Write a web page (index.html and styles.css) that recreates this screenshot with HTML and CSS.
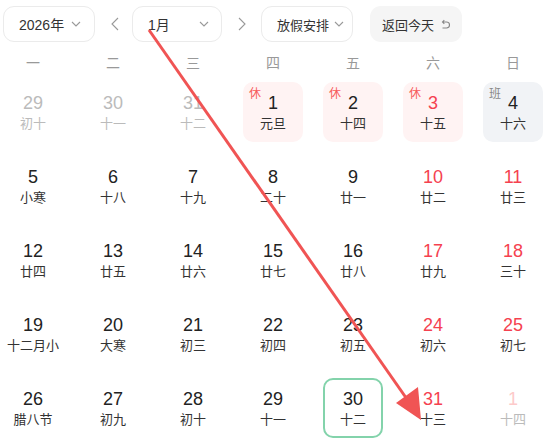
FILE: index.html
```html
<!DOCTYPE html>
<html lang="zh">
<head>
<meta charset="utf-8">
<link rel="stylesheet" href="styles.css">
</head>
<body>
<div class="app">
  <div class="toolbar">
    <div class="select year">2026年<svg class="chev" width="10" height="6" viewBox="0 0 10 6"><polyline points="1,1 5,5 9,1"/></svg></div>
    <div class="nav"><svg width="8" height="14" viewBox="0 0 8 14"><polyline points="7,1 1,7 7,13"/></svg></div>
    <div class="select month">1月<svg class="chev" width="10" height="6" viewBox="0 0 10 6"><polyline points="1,1 5,5 9,1"/></svg></div>
    <div class="nav nav-r"><svg width="8" height="14" viewBox="0 0 8 14"><polyline points="1,1 7,7 1,13"/></svg></div>
    <div class="select holiday">放假安排<svg class="chev" width="10" height="6" viewBox="0 0 10 6"><polyline points="1,1 5,5 9,1"/></svg></div>
    <div class="today-btn">返回今天<svg class="ret" width="10" height="11" viewBox="0 0 10 11"><path d="M2.5 3 H6.5 A3 3 0 0 1 6.5 9 H2.5 M4.3 1.2 L2.5 3 L4.3 4.8"/></svg></div>
  </div>
  <div class="weekdays">
    <span>一</span><span>二</span><span>三</span><span>四</span><span>五</span><span>六</span><span>日</span>
  </div>
  <div class="grid">
    <div class="cell other"><span class="num">29</span><span class="lunar">初十</span></div>
    <div class="cell other"><span class="num">30</span><span class="lunar">十一</span></div>
    <div class="cell other"><span class="num">31</span><span class="lunar">十二</span></div>
    <div class="cell rest"><i class="tag">休</i><span class="num">1</span><span class="lunar">元旦</span></div>
    <div class="cell rest"><i class="tag">休</i><span class="num">2</span><span class="lunar">十四</span></div>
    <div class="cell rest weekend"><i class="tag">休</i><span class="num">3</span><span class="lunar">十五</span></div>
    <div class="cell work"><i class="tag">班</i><span class="num">4</span><span class="lunar">十六</span></div>

    <div class="cell"><span class="num">5</span><span class="lunar">小寒</span></div>
    <div class="cell"><span class="num">6</span><span class="lunar">十八</span></div>
    <div class="cell"><span class="num">7</span><span class="lunar">十九</span></div>
    <div class="cell"><span class="num">8</span><span class="lunar">二十</span></div>
    <div class="cell"><span class="num">9</span><span class="lunar">廿一</span></div>
    <div class="cell weekend"><span class="num">10</span><span class="lunar">廿二</span></div>
    <div class="cell weekend"><span class="num">11</span><span class="lunar">廿三</span></div>

    <div class="cell"><span class="num">12</span><span class="lunar">廿四</span></div>
    <div class="cell"><span class="num">13</span><span class="lunar">廿五</span></div>
    <div class="cell"><span class="num">14</span><span class="lunar">廿六</span></div>
    <div class="cell"><span class="num">15</span><span class="lunar">廿七</span></div>
    <div class="cell"><span class="num">16</span><span class="lunar">廿八</span></div>
    <div class="cell weekend"><span class="num">17</span><span class="lunar">廿九</span></div>
    <div class="cell weekend"><span class="num">18</span><span class="lunar">三十</span></div>

    <div class="cell"><span class="num">19</span><span class="lunar">十二月小</span></div>
    <div class="cell"><span class="num">20</span><span class="lunar">大寒</span></div>
    <div class="cell"><span class="num">21</span><span class="lunar">初三</span></div>
    <div class="cell"><span class="num">22</span><span class="lunar">初四</span></div>
    <div class="cell"><span class="num">23</span><span class="lunar">初五</span></div>
    <div class="cell weekend"><span class="num">24</span><span class="lunar">初六</span></div>
    <div class="cell weekend"><span class="num">25</span><span class="lunar">初七</span></div>

    <div class="cell"><span class="num">26</span><span class="lunar">腊八节</span></div>
    <div class="cell"><span class="num">27</span><span class="lunar">初九</span></div>
    <div class="cell"><span class="num">28</span><span class="lunar">初十</span></div>
    <div class="cell"><span class="num">29</span><span class="lunar">十一</span></div>
    <div class="cell today"><span class="num">30</span><span class="lunar">十二</span></div>
    <div class="cell weekend"><span class="num">31</span><span class="lunar">十三</span></div>
    <div class="cell other next"><span class="num">1</span><span class="lunar">十四</span></div>
  </div>
  <svg class="annot" width="553" height="444" viewBox="0 0 553 444">
    <line x1="149" y1="30" x2="409" y2="402" />
    <polygon points="421,420 396,403 418,387" />
  </svg>
</div>
</body>
</html>
```

FILE: styles.css
```css
html, body {
  margin: 0;
  padding: 0;
  background: #fff;
}
body {
  font-family: "Liberation Sans", "Noto Sans CJK SC", sans-serif;
  color: #222;
}
.app {
  position: relative;
  width: 553px;
  height: 444px;
  padding: 6px 0 0 3px;
  box-sizing: border-box;
  overflow: hidden;
}
.toolbar {
  display: flex;
  align-items: center;
  height: 36px;
}
.select {
  box-sizing: border-box;
  height: 36px;
  border: 1px solid #ebebeb;
  border-radius: 11px;
  display: flex;
  align-items: center;
  justify-content: space-between;
  font-size: 14px;
  color: #333;
}
.chev polyline, .nav polyline {
  fill: none;
  stroke: #999;
  stroke-width: 1.1;
}
.year {
  width: 92px;
  padding: 0 13px 0 15px;
}
.month {
  width: 90px;
  padding: 0 12px 0 15px;
}
.holiday {
  width: 92px;
  padding: 0 8px 0 15px;
  justify-content: flex-start;
  gap: 5px;
  font-size: 13px;
}
.nav {
  width: 37px;
  display: flex;
  justify-content: center;
  align-items: center;
  padding-left: 2px;
  box-sizing: border-box;
}
.nav-r {
  width: 39px;
  padding-left: 0;
}
.today-btn {
  margin-left: 17px;
  width: 92px;
  height: 36px;
  box-sizing: border-box;
  padding: 0 0 0 12px;
  background: #f5f5f5;
  border-radius: 11px;
  display: flex;
  align-items: center;
  gap: 6px;
  font-size: 13px;
  color: #333;
}
.ret path {
  fill: none;
  stroke: #888;
  stroke-width: 1.1;
}
.weekdays {
  margin-top: 11px;
  display: grid;
  grid-template-columns: repeat(7, 60px);
  column-gap: 20px;
  height: 20px;
  line-height: 20px;
  font-size: 14px;
  color: #999;
  text-align: center;
}
.grid {
  margin-top: 9px;
  display: grid;
  grid-template-columns: repeat(7, 60px);
  grid-auto-rows: 60px;
  column-gap: 20px;
  row-gap: 14px;
}
.cell {
  position: relative;
  box-sizing: border-box;
  border-radius: 10px;
  display: flex;
  flex-direction: column;
  align-items: center;
  padding-top: 11px;
}
.num {
  font-size: 18px;
  line-height: 20px;
  color: #222;
}
.lunar {
  margin-top: 3px;
  font-size: 13px;
  line-height: 16px;
  color: #333;
  white-space: nowrap;
}
.other .num, .other .lunar {
  color: #bbb;
}
.other.next .num {
  color: #fdcaca;
}
.weekend .num {
  color: #f5414f;
}
.rest {
  background: #fff3f3;
}
.work {
  background: #f1f3f6;
}
.tag {
  position: absolute;
  top: 5px;
  left: 6px;
  font-style: normal;
  font-size: 12px;
  line-height: 14px;
  color: #f75a5a;
}
.work .tag {
  color: #888;
}
.today {
  border: 2px solid #83d3ab;
  padding-top: 9px;
}
.annot {
  position: absolute;
  left: 0;
  top: 0;
  pointer-events: none;
}
.annot line {
  stroke: #f05454;
  stroke-width: 3;
}
.annot polygon {
  fill: #f05454;
}
```
